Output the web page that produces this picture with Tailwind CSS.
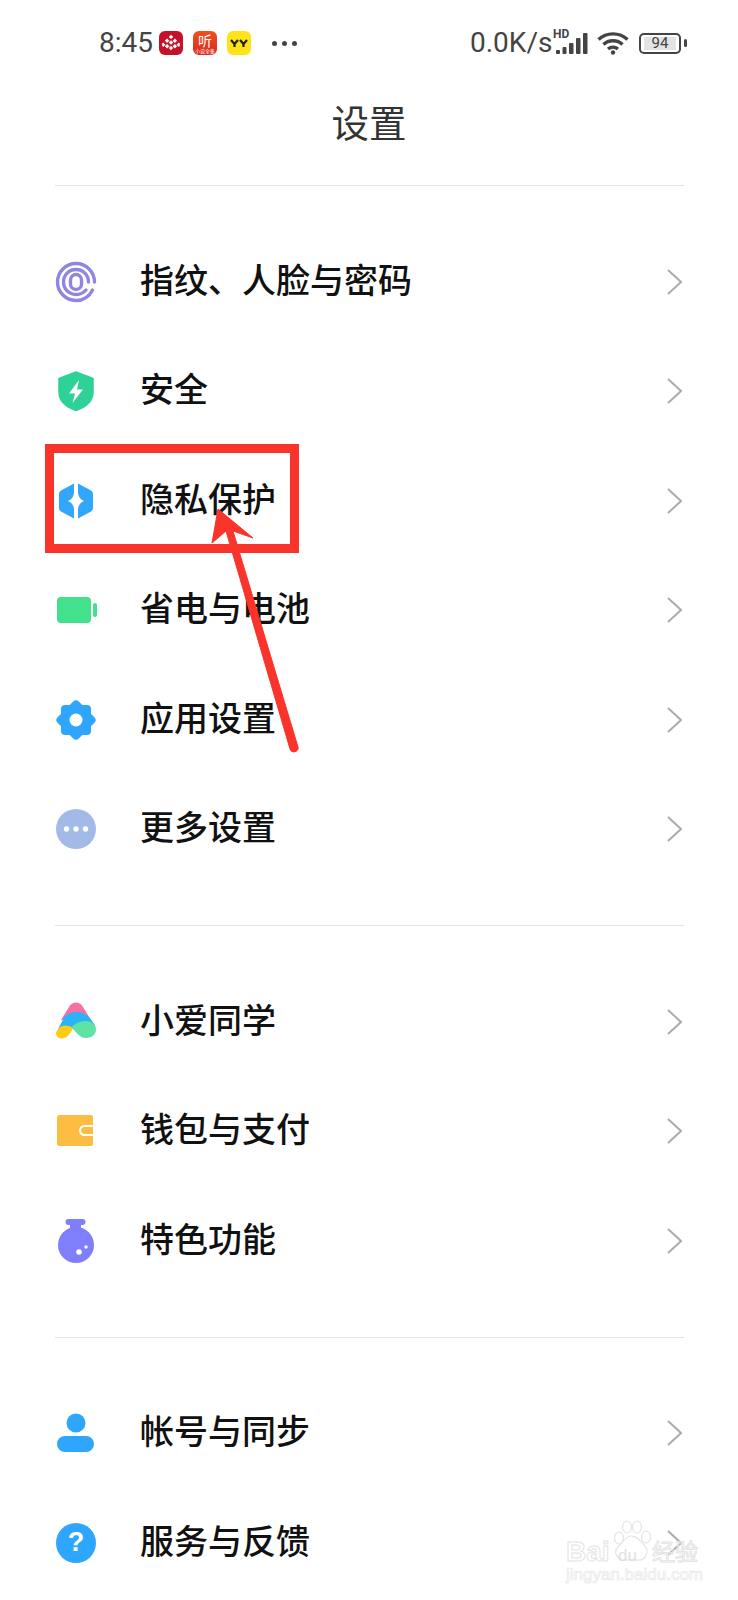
<!DOCTYPE html>
<html lang="zh">
<head>
<meta charset="utf-8">
<script src="https://cdn.jsdelivr.net/npm/@tailwindcss/browser@4"></script>
<title>设置</title>
</head>
<body class="bg-white">
<div class="relative w-[738px] h-[1600px] overflow-hidden bg-white font-['Noto_Sans_CJK_SC','Noto_Sans',sans-serif] text-[#111]">

  <!-- status bar -->
  <div class="h-[86px] flex items-center pl-[99px] text-[#444]">
    <span class="w-[54px] font-['Roboto',sans-serif] text-[28px] leading-none">8:45</span>
    <div class="ml-[6px] w-[24px] h-[24px] rounded-[6px] bg-[#c5122a] flex items-center justify-center">
      <svg width="20" height="20" viewBox="0 0 18 18" fill="#fff"><path d="M9 1.500l2 2-2 2-2-2zM5.500 5l2 2-2 2-2-2zM12.500 5l2 2-2 2-2-2zM9 6.500l2 2-2 2-2-2zM2 8.500l2 2-2 2-1-1v-2zM16 8.500l1 1v2l-1 1-2-2zM5.500 10l2 2-2 2-2-2zM12.500 10l2 2-2 2-2-2zM9 11.500l2 2-2 2-2-2z"/></svg>
    </div>
    <div class="ml-[10px] w-[24px] h-[24px] rounded-[6px] bg-gradient-to-b from-[#f0501e] to-[#d9261c] flex flex-col items-center justify-center text-white leading-none">
      <span class="text-[14px] leading-[15px]">听</span>
      <span class="text-[5px] leading-[6px] text-white">小说全集</span>
    </div>
    <div class="ml-[10px] w-[24px] h-[24px] rounded-[6px] bg-[#ffe319] flex items-center justify-center">
      <svg width="18" height="9" viewBox="0 0 18 9" fill="none" stroke="#222" stroke-width="2.200"><path d="M1 1l3.500 4 3.500-4M4.500 5v3M10 1l3.500 4 3.500-4M13.500 5v3"/></svg>
    </div>
    <div class="ml-[21px] flex gap-[5px]">
      <span class="w-[5px] h-[5px] rounded-full bg-[#444]"></span>
      <span class="w-[5px] h-[5px] rounded-full bg-[#444]"></span>
      <span class="w-[5px] h-[5px] rounded-full bg-[#444]"></span>
    </div>
    <span class="ml-[173px] w-[82px] font-['Roboto',sans-serif] text-[28px] leading-none">0.0K/s</span>
    <div class="relative w-[36px] h-[24px] ml-[1px]">
      <span class="absolute left-0 top-[-3px] font-['Roboto',sans-serif] font-bold text-[12px] leading-none">HD</span>
      <svg class="absolute left-0 top-0" width="36" height="24" viewBox="0 0 36 24" fill="#444"><rect x="3" y="19" width="4" height="4" rx="1"/><rect x="9.500" y="16" width="4" height="7" rx="1"/><rect x="16" y="12" width="4.500" height="11" rx="1"/><rect x="23" y="7" width="4.500" height="16" rx="1"/><rect x="30" y="2" width="4.500" height="21" rx="1"/></svg>
    </div>
    <svg class="ml-[8px]" width="32" height="24" viewBox="0 0 32 24" fill="none" stroke="#444" stroke-width="3.400"><path d="M1.500 8.500C9.500 1 22.500 1 30.500 8.500"/><path d="M6.500 13.500C11.500 8.500 20.500 8.500 25.500 13.500"/><path d="M11 18C14 15.500 18 15.500 21 18"/><circle cx="16" cy="21.500" r="2.200" fill="#444" stroke="none"/></svg>
    <div class="ml-[10px] w-[42px] h-[21px] rounded-[5px] border-[2px] border-[#444] flex items-center justify-center">
      <span class="w-[32px] h-[13px] bg-[#e3e3e3] flex items-center justify-center font-['Roboto',sans-serif] text-[15px] leading-none">94</span>
    </div>
    <span class="ml-[3px] w-[3px] h-[8px] rounded-full bg-[#444]"></span>
  </div>

  <!-- title -->
  <h1 class="h-[72px] pb-[2px] flex items-center justify-center text-[37.500px] font-normal leading-none text-[#333]">设置</h1>
  <div class="mt-[27px] ml-[55px] mr-[54px] h-[1px] bg-[#e2e2e2]"></div>

  <!-- section 1 -->
  <section class="ml-[55px] mr-[54px] py-[41px] border-b border-[#e2e2e2]">
    <div class="h-[109.500px] flex items-center">
      <svg class="w-[42px] h-[42px] overflow-visible" viewBox="0 0 42 42" fill="none" stroke="#8f86e0" stroke-width="3.400" stroke-linecap="round">
        <path d="M37.500 29C34.500 35.500 28 39.500 21 39.500 10.800 39.500 2.500 31.200 2.500 21S10.800 2.500 21 2.500 39.500 10.800 39.500 21"/>
        <path d="M33.500 21C33.500 14 28 8.500 21 8.500S8.500 14 8.500 21 14 33.500 21 33.500C25 33.500 28.500 32 31 29"/>
        <rect x="15.500" y="13.500" width="11" height="15" rx="5.500"/>
      </svg>
      <span class="ml-[43px] mb-[6px] text-[34px] font-medium leading-none">指纹、人脸与密码</span>
      <svg class="ml-auto mr-[2px]" width="15" height="26" viewBox="0 0 15 26" fill="none" stroke="#ababab" stroke-width="2"><path d="M1 1l13 12L1 25"/></svg>
    </div>
    <div class="h-[109.500px] flex items-center">
      <svg class="w-[42px] h-[42px] overflow-visible" viewBox="0 0 42 42">
        <path d="M21 2L38 8.500V22C38 31 31 37 21 40.500 11 37 4 31 4 22V8.500z" fill="#2fd296" stroke="#2fd296" stroke-width="1.500" stroke-linejoin="round"/>
        <path d="M24 10L14 23.500h6L17.500 33 28 19.500h-6z" fill="#fff"/>
      </svg>
      <span class="ml-[43px] mb-[6px] text-[34px] font-medium leading-none">安全</span>
      <svg class="ml-auto mr-[2px]" width="15" height="26" viewBox="0 0 15 26" fill="none" stroke="#ababab" stroke-width="2"><path d="M1 1l13 12L1 25"/></svg>
    </div>
    <div class="h-[109.500px] flex items-center">
      <svg class="w-[42px] h-[42px] overflow-visible" viewBox="0 0 42 42">
        <path d="M19 3.500V13C18.500 17 16.500 19.500 13 21 16.500 22.500 18.500 25 19 29V38.500L6 31.500C4.800 30.800 4 29.500 4 28V14C4 12.500 4.800 11.200 6 10.500z" fill="#31a6fb"/>
        <path d="M23 3.500V13C23.500 17 25.500 19.500 29 21 25.500 22.500 23.500 25 23 29V38.500L36 31.500C37.200 30.800 38 29.500 38 28V14C38 12.500 37.200 11.200 36 10.500z" fill="#31a6fb"/>
      </svg>
      <span class="ml-[43px] mb-[6px] text-[34px] font-medium leading-none">隐私保护</span>
      <svg class="ml-auto mr-[2px]" width="15" height="26" viewBox="0 0 15 26" fill="none" stroke="#ababab" stroke-width="2"><path d="M1 1l13 12L1 25"/></svg>
    </div>
    <div class="h-[109.500px] flex items-center">
      <svg class="w-[42px] h-[42px] overflow-visible" viewBox="0 0 42 42" fill="#43e08e">
        <rect x="2" y="8" width="34" height="26" rx="4"/>
        <rect x="38" y="14" width="4" height="14" rx="2"/>
      </svg>
      <span class="ml-[43px] mb-[6px] text-[34px] font-medium leading-none">省电与电池</span>
      <svg class="ml-auto mr-[2px]" width="15" height="26" viewBox="0 0 15 26" fill="none" stroke="#ababab" stroke-width="2"><path d="M1 1l13 12L1 25"/></svg>
    </div>
    <div class="h-[109.500px] flex items-center">
      <svg class="w-[42px] h-[42px] overflow-visible" viewBox="0 0 42 42">
        <g fill="#2fa6fd" stroke="#2fa6fd" stroke-width="8" stroke-linejoin="round">
          <rect x="10" y="10" width="22" height="22"/>
          <rect x="10" y="10" width="22" height="22" transform="rotate(45 21 21)"/>
        </g>
        <circle cx="21" cy="21" r="6.500" fill="#fff"/>
      </svg>
      <span class="ml-[43px] mb-[6px] text-[34px] font-medium leading-none">应用设置</span>
      <svg class="ml-auto mr-[2px]" width="15" height="26" viewBox="0 0 15 26" fill="none" stroke="#ababab" stroke-width="2"><path d="M1 1l13 12L1 25"/></svg>
    </div>
    <div class="h-[109.500px] flex items-center">
      <svg class="w-[42px] h-[42px] overflow-visible" viewBox="0 0 42 42">
        <circle cx="21" cy="21" r="20" fill="#a3b9e8"/>
        <circle cx="11.500" cy="21" r="2.700" fill="#fff"/><circle cx="21" cy="21" r="2.700" fill="#fff"/><circle cx="30.500" cy="21" r="2.700" fill="#fff"/>
      </svg>
      <span class="ml-[43px] mb-[6px] text-[34px] font-medium leading-none">更多设置</span>
      <svg class="ml-auto mr-[2px]" width="15" height="26" viewBox="0 0 15 26" fill="none" stroke="#ababab" stroke-width="2"><path d="M1 1l13 12L1 25"/></svg>
    </div>
  </section>

  <!-- section 2 -->
  <section class="ml-[55px] mr-[54px] py-[41px] border-b border-[#e2e2e2]">
    <div class="h-[109.500px] flex items-center">
      <svg class="w-[42px] h-[42px] overflow-visible" viewBox="0 0 42 42">
        <path d="M14 6C17 0 25 0 28 6L36 19H6z" fill="#f76fa4"/>
        <path d="M3 28L10 15C14 12 18 11 22 11 27 11 31 13 34 16L40 24 22 31 16 26C11 25 6 26 3 28z" fill="#29b4f8"/>
        <path d="M17 26C20 22 26 20 31 20 37 20 41 24 41 28.500 41 33 37 37 31 37 25 37 21 32 17 26z" fill="#5fe3a5"/>
        <path d="M1 32C2 28 6 24.500 10 24.500 13 24.500 16 25.500 18 27.500 15 33 12 37.500 6.500 37.500 3 37.500 1 35 1 32z" fill="#fbcd17"/>
      </svg>
      <span class="ml-[43px] mb-[6px] text-[34px] font-medium leading-none">小爱同学</span>
      <svg class="ml-auto mr-[2px]" width="15" height="26" viewBox="0 0 15 26" fill="none" stroke="#ababab" stroke-width="2"><path d="M1 1l13 12L1 25"/></svg>
    </div>
    <div class="h-[109.500px] flex items-center">
      <svg class="w-[42px] h-[42px] overflow-visible" viewBox="0 0 42 42">
        <rect x="2" y="5" width="36" height="31" rx="2.500" fill="#fdbd42"/>
        <path d="M38 16H29.500A4.500 4.500 0 0 0 29.500 25H38" fill="#fdbd42" stroke="#fff" stroke-width="2"/>
      </svg>
      <span class="ml-[43px] mb-[6px] text-[34px] font-medium leading-none">钱包与支付</span>
      <svg class="ml-auto mr-[2px]" width="15" height="26" viewBox="0 0 15 26" fill="none" stroke="#ababab" stroke-width="2"><path d="M1 1l13 12L1 25"/></svg>
    </div>
    <div class="h-[109.500px] flex items-center">
      <svg class="w-[42px] h-[42px] overflow-visible" viewBox="0 0 42 42" fill="#7f7ffb">
        <rect x="10.500" y="-1" width="20" height="6" rx="3"/>
        <rect x="15" y="3" width="11" height="8"/>
        <circle cx="21" cy="25" r="18"/>
        <circle cx="24" cy="32" r="2.800" fill="#fff"/>
        <circle cx="31" cy="27" r="1.700" fill="#fff"/>
      </svg>
      <span class="ml-[43px] mb-[6px] text-[34px] font-medium leading-none">特色功能</span>
      <svg class="ml-auto mr-[2px]" width="15" height="26" viewBox="0 0 15 26" fill="none" stroke="#ababab" stroke-width="2"><path d="M1 1l13 12L1 25"/></svg>
    </div>
  </section>

  <!-- section 3 -->
  <section class="ml-[55px] mr-[54px] pt-[41px]">
    <div class="h-[109.500px] flex items-center">
      <svg class="w-[42px] h-[42px] overflow-visible" viewBox="0 0 42 42" fill="#2fa6fd">
        <circle cx="21" cy="11" r="9.500"/>
        <rect x="2" y="24" width="37" height="16" rx="8"/>
      </svg>
      <span class="ml-[43px] mb-[6px] text-[34px] font-medium leading-none">帐号与同步</span>
      <svg class="ml-auto mr-[2px]" width="15" height="26" viewBox="0 0 15 26" fill="none" stroke="#ababab" stroke-width="2"><path d="M1 1l13 12L1 25"/></svg>
    </div>
    <div class="h-[109.500px] flex items-center">
      <div class="relative w-[42px] h-[42px]">
        <div class="w-[40px] h-[40px] m-[1px] rounded-full bg-[#2fa6fd] flex items-center justify-center text-white font-['Liberation_Sans',sans-serif] font-bold text-[27px] leading-none">?</div>
      </div>
      <span class="ml-[43px] mb-[6px] text-[34px] font-medium leading-none">服务与反馈</span>
      <svg class="ml-auto mr-[2px]" width="15" height="26" viewBox="0 0 15 26" fill="none" stroke="#ababab" stroke-width="2"><path d="M1 1l13 12L1 25"/></svg>
    </div>
  </section>

  <!-- annotation: red box and arrow -->
  <div class="absolute left-[45px] top-[444px] w-[254px] h-[109px] border-[9px] border-[#f9342b]"></div>
  <svg class="absolute left-0 top-0 pointer-events-none" width="738" height="1600" viewBox="0 0 738 1600">
    <path d="M218 509L253 538 233 531 298 747C299.500 752 291 754 290 749L226 531 212 543z" fill="#f9342b" stroke="#f9342b" stroke-width="1" stroke-linejoin="round"/>
  </svg>

  <!-- watermark -->
  <div class="absolute left-[566px] top-[1520px] w-[136px] h-[66px] text-center">
    <svg class="absolute left-[44px] top-0" width="42" height="44" viewBox="0 0 42 44" fill="#fff" stroke="#e4e4e4" stroke-width="1.200">
      <ellipse cx="9" cy="18" rx="4.500" ry="6"/><ellipse cx="17" cy="7" rx="4.500" ry="6"/><ellipse cx="27" cy="7" rx="4.500" ry="6"/><ellipse cx="36" cy="17" rx="4.500" ry="6"/>
      <path d="M21 16C28 16 31 22 35 26 40 32 35 41 28 40 24 39.500 19 39.500 15 40 7 41 3 32 8 27 13 23 15 16 21 16z"/>
    </svg>
    <span class="absolute left-0 top-[18px] font-['Liberation_Sans',sans-serif] font-bold text-[28px] leading-none text-white/0 [-webkit-text-stroke:1px_#e4e4e4]">Bai</span>
    <span class="absolute left-[52px] top-[27px] font-['Liberation_Sans',sans-serif] text-[17px] leading-none text-[#e0e0e0]">du</span>
    <span class="absolute left-[86px] top-[19px] text-[23px] leading-none text-white/0 [-webkit-text-stroke:1px_#e4e4e4]">经验</span>
    <span class="absolute left-0 top-[46px] w-[136px] font-['Liberation_Sans',sans-serif] text-[17px] leading-none text-white/0 [-webkit-text-stroke:0.7px_#e8e8e8]">jingyan.baidu.com</span>
  </div>
</div>
</body>
</html>
